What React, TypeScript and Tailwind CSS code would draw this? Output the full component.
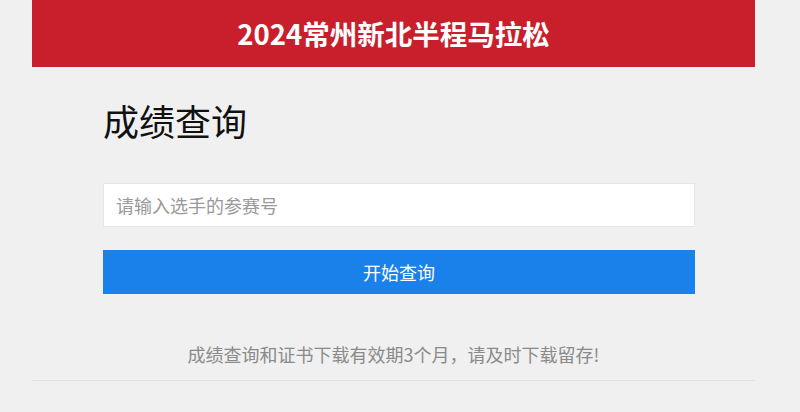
import React from "react";

export default function App() {
  const font = { fontFamily: '"Noto Sans CJK SC", "Noto Sans", sans-serif' };
  return (
    <div className="min-h-[412px] w-full bg-[#f0f0f0]" style={font}>
      <div className="ml-[32px] w-[723px]">
        <div className="flex h-[67px] items-center justify-center bg-[#c91f2c]">
          <h1 className="text-[27.5px] font-bold leading-none text-white">2024常州新北半程马拉松</h1>
        </div>
        <div className="pl-[71px] pr-[60px]">
          <h2 className="mt-[31px] text-[36px] font-normal leading-[44px] text-[#111]">成绩查询</h2>
          <input
            className="mt-[41px] block h-[44px] w-full border border-[#e6e6e6] bg-white px-[12px] text-[18px] text-[#333] outline-none placeholder:text-[#999]"
            placeholder="请输入选手的参赛号"
          />
          <button className="mt-[23px] flex h-[44px] w-full items-center justify-center bg-[#1a80ea] text-[18px] text-white">
            开始查询
          </button>
        </div>
        <p className="mt-[46px] text-center text-[18px] leading-[28px] text-[#8a8a8a]">
          成绩查询和证书下载有效期3个月，请及时下载留存!
        </p>
        <div className="mt-[12px] h-px bg-[#e2e2e2]" />
      </div>
    </div>
  );
}
